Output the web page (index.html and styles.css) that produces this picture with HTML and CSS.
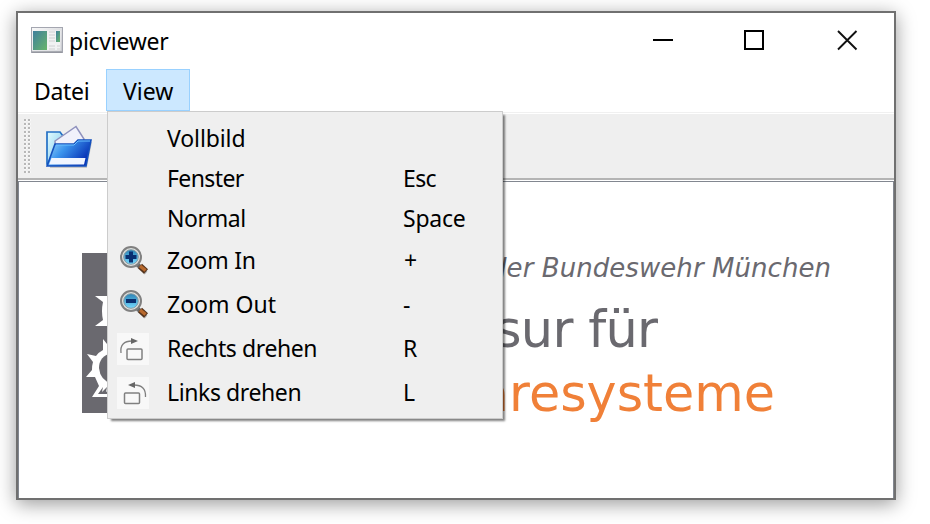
FILE: index.html
```html
<!DOCTYPE html>
<html lang="de">
<head>
<meta charset="utf-8">
<title>picviewer</title>
<link rel="stylesheet" href="styles.css">
</head>
<body>
<svg class="defs" width="0" height="0" aria-hidden="true">
  <defs>
    <linearGradient id="pane" x1="0" y1="0" x2="1" y2="1"><stop offset="0" stop-color="#3f7f9d"/><stop offset="1" stop-color="#68b56b"/></linearGradient>
    <linearGradient id="frame" x1="0" y1="0" x2="1" y2="1"><stop offset="0" stop-color="#fafafa"/><stop offset="1" stop-color="#c4c6cc"/></linearGradient>
    <linearGradient id="folder" x1="0" y1="0" x2="1" y2=".5"><stop offset="0" stop-color="#a5dafa"/><stop offset=".45" stop-color="#3b94ed"/><stop offset="1" stop-color="#0731b5"/></linearGradient>
    <linearGradient id="back" x1="0" y1="0" x2="1" y2="1"><stop offset="0" stop-color="#e3fcff"/><stop offset="1" stop-color="#79c6ec"/></linearGradient>
    <linearGradient id="lens" x1="0" y1="0" x2="0" y2="1"><stop offset="0" stop-color="#2b83b5"/><stop offset="1" stop-color="#75d9ff"/></linearGradient>
    <g id="glass">
      <path d="M20 20l9 8" stroke="#aaa" stroke-width="4"/>
      <path d="M20 19l4 3.500" stroke="#666" stroke-width="4"/>
      <path d="M23 21l6 5.500" stroke="#54331c" stroke-width="6"/>
      <path d="M23 21l5.500 4.500" stroke="#b8692d" stroke-width="3.500"/>
      <circle cx="14" cy="12" r="10" fill="#dde0de" stroke="#808080" stroke-width="2"/>
      <circle cx="14" cy="12" r="7.300" fill="url(#lens)" stroke="#8a9ba2"/>
    </g>
  </defs>
</svg>
<main class="window">
  <header class="titlebar">
    <svg class="app-icon" width="32" height="26" viewBox="0 0 32 26">
      <rect x=".5" y=".5" width="31" height="25" fill="url(#frame)" stroke="#a4a6b0"/>
      <path d="M1 25h30" stroke="#858890"/>
      <rect x="1.500" y="3.500" width="28" height="20" fill="#f1f2f3"/>
      <rect x="2" y="4" width="14" height="19" fill="url(#pane)"/>
      <path d="M18 5h6M18 8h6M18 11h6M18 14h6M18 19h6M18 22h6M26 19h3M26 22h3" stroke="#cfd0d2"/>
      <rect x="25" y="4" width="4" height="11" fill="url(#pane)"/>
    </svg>
    <h1 class="title">picviewer</h1>
    <svg class="controls" width="206" height="22" viewBox="0 0 206 22">
      <path d="M0 11h20" stroke="#000" stroke-width="2"/>
      <rect x="92" y="2" width="18" height="18" fill="none" stroke="#000" stroke-width="2"/>
      <path d="M185 2l18.500 18.500M203.500 2l-18.500 18.500" stroke="#111" stroke-width="1.900"/>
    </svg>
  </header>
  <nav class="menubar">
    <span class="menu-name datei">Datei</span>
    <div class="menu-open">
      <span class="menu-name view">View</span>
      <div class="dropdown">
        <div class="item"><span class="icon"></span><span class="label vollbild">Vollbild</span></div>
        <div class="item"><span class="icon"></span><span class="label fenster">Fenster</span><span class="key esc">Esc</span></div>
        <div class="item"><span class="icon"></span><span class="label normal">Normal</span><span class="key space">Space</span></div>
        <div class="item tall"><span class="icon"><svg width="32" height="32"><use href="#glass"/><path d="M8.500 12h11M14 6.500v11" stroke="#092f70" stroke-width="4"/></svg></span><span class="label zoom-in">Zoom In</span><span class="key plus">+</span></div>
        <div class="item tall"><span class="icon"><svg width="32" height="32"><use href="#glass"/><path d="M9 12h10" stroke="#092f70" stroke-width="4"/></svg></span><span class="label">Zoom Out</span><span class="key minus">-</span></div>
        <div class="item tall"><span class="icon tile"><svg width="32" height="32" fill="none" stroke="#808080"><rect x="10" y="16" width="15" height="10.500" rx="1" stroke-width="1.500"/><path d="M4 20C3 12 7 8 15 8" stroke-width="1.300"/><path d="M14 5l7 3-7 3z" fill="#666" stroke="none"/></svg></span><span class="label rechts">Rechts drehen</span><span class="key">R</span></div>
        <div class="item tall"><span class="icon tile"><svg width="32" height="32" fill="none" stroke="#808080"><rect x="7.500" y="16" width="15" height="10.500" rx="1" stroke-width="1.500"/><path d="M28.500 20C29 12 25 8 17 8" stroke-width="1.300"/><path d="M18 5l-7 3 7 3z" fill="#666" stroke="none"/></svg></span><span class="label links">Links drehen</span><span class="key">L</span></div>
      </div>
    </div>
  </nav>
  <div class="toolbar">
    <span class="grip"></span>
    <svg width="48" height="46" viewBox="0 0 48 46">
      <path d="M4 44h36l5-25" fill="none" stroke="#aaa" stroke-opacity=".6" stroke-width="2"/>
      <path d="M1 41V9h13l3 4v28z" fill="url(#back)" stroke="#2470c5" stroke-width="1.700"/>
      <path d="M9 18L30 3.500 38 16 30 30H10z" fill="#f1f1fb" stroke="#8f91bd" stroke-width="1.500"/>
      <path d="M1 43L9 21h19l4-4h13l-5 26z" fill="url(#folder)" stroke="#1450bd" stroke-width="1.600"/>
      <path d="M10 22h18l4-4h12" stroke="#69bfff" fill="none"/>
      <path d="M5.500 35h34l-1.500 6.500H3z" fill="#f0f5ff"/>
    </svg>
  </div>
  <section class="canvas">
    <svg class="picture" width="874" height="316" viewBox="19 182 874 316">
      <path fill="#6a696f" d="M82 253h60v160H82z"/>
      <path fill="#fff" d="M95 296h20v30H95l8-6q-2-9 0-18z"/>
      <path fill="#fff" d="M103 339l4 5h10v53H92l7-11-4-9-9 0 6-7q0-5 1-8l-6-8 9 2q3-4 7-6z"/>
      <path fill="#6a696f" d="M112 353q-13 3-13 15 1 12 13 16z"/>
      <path fill="#6a696f" d="M98 394l5-7-1 5 5-5-1 5 6-4v6z"/>
      <g class="lettering">
        <text class="university" x="490" y="277" textLength="341">der Bundeswehr München</text>
        <text class="chair" x="495" y="347" textLength="163">sur für</text>
        <text class="systems" x="478" y="411" textLength="297" lengthAdjust="spacingAndGlyphs">aresysteme</text>
      </g>
    </svg>
  </section>
</main>
</body>
</html>
```
FILE: styles.css
```css
* { box-sizing: border-box; }
body {
  margin: 0;
  padding: 11px 0 0 16px;
  height: 524px;
  overflow: hidden;
  background: #fff;
  color: #000;
  font-family: "Noto Sans", "Open Sans", sans-serif;
  font-size: 23px;
}
.defs { position: absolute; }
svg { display: block; flex: none; }
.window {
  display: flex;
  flex-direction: column;
  width: 880px;
  height: 489px;
  border: 2px solid #707070;
  background: #fff;
  box-shadow: 0 4px 18px rgba(0, 0, 0, .4);
}
.titlebar {
  display: flex;
  align-items: center;
  flex: none;
  height: 56px;
  padding: 0 35px 2px 13px;
}
.title {
  margin: 2px 0 0 6px;
  font-size: 23px;
  font-weight: 400;
  letter-spacing: -.25px;
}
.controls { margin-left: auto; }
.menubar {
  display: flex;
  flex: none;
  height: 43px;
}
.menu-name {
  display: flex;
  align-items: center;
  height: 42px;
  padding: 2px 0 0 16px;
}
.datei { width: 88px; letter-spacing: -.3px; }
.menu-open { position: relative; }
.view {
  width: 84px;
  border: 1px solid #99d1ff;
  background: #cce8ff;
}
.dropdown {
  position: absolute;
  top: 42px;
  left: 1px;
  z-index: 1;
  width: 396px;
  height: 308px;
  padding: 7px 0 3px;
  border: 1px solid #ccc;
  background: #efefef;
  box-shadow: 3px 3px 2px -1px rgba(0, 0, 0, .5);
}
.item {
  display: flex;
  align-items: center;
  height: 40px;
  padding-left: 9px;
}
.tall { height: 44px; }
.icon { width: 32px; height: 32px; margin-right: 18px; }
.tile { background: #f8f8f8; }
.label { width: 236px; white-space: nowrap; }
.label, .key { padding-bottom: 2px; }
.vollbild { letter-spacing: -.1px; }
.fenster { letter-spacing: -.6px; }
.normal { letter-spacing: -.4px; }
.zoom-in { letter-spacing: -.25px; }
.rechts { letter-spacing: -.4px; }
.links { letter-spacing: -.4px; }
.esc { letter-spacing: -.6px; }
.space { letter-spacing: -.25px; }
.plus { padding-left: 1px; }
.toolbar {
  display: flex;
  align-items: center;
  flex: none;
  height: 68px;
  padding: 1px 0 0 6px;
  gap: 15px;
  border-top: 1px solid #f0f0f0;
  border-bottom: 2px solid #b4b4b4;
  background: #efefef;
  box-shadow: inset 0 1px #fff;
}
.grip {
  width: 7px;
  height: 54px;
  background: radial-gradient(circle at 1px 1px, #b8b8b8 1px, #fafafa 1.5px, transparent 2px) 0 0 / 4px 4px;
}
.canvas {
  flex: 1;
  margin-top: 1px;
  overflow: hidden;
  border: 1px solid #828790;
  border-bottom: 0;
}
.lettering { font-family: "DejaVu Sans", sans-serif; fill: #6a696f; }
.university { font-size: 26px; font-style: italic; }
.chair { font-size: 51px; }
.lettering .systems { font-size: 51px; fill: #f08038; }
```
